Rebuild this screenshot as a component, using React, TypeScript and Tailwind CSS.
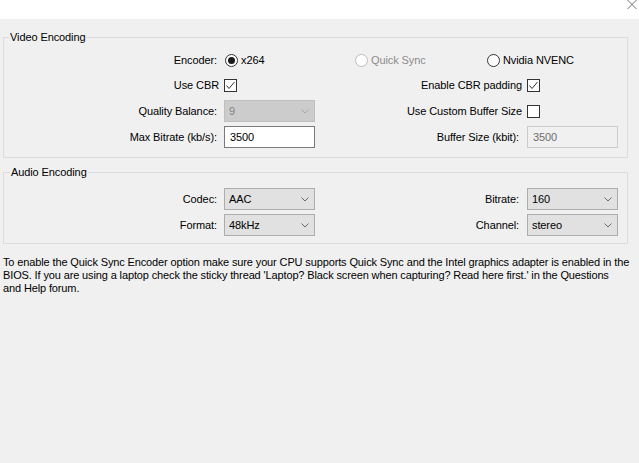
import React from "react";

function Checkbox({ checked }: { checked?: boolean }) {
  return (
    <span className="flex h-[13px] w-[13px] items-center justify-center border border-[#333333] bg-white">
      {checked && (
        <svg width="11" height="11" viewBox="0 0 11 11">
          <path d="M1.5 5.5 L4 8.5 L9.5 2" fill="none" stroke="#333333" strokeWidth="1" />
        </svg>
      )}
    </span>
  );
}

function Radio({ checked, disabled }: { checked?: boolean; disabled?: boolean }) {
  return (
    <span
      className={
        "flex h-[13px] w-[13px] items-center justify-center rounded-full border bg-white " +
        (disabled ? "border-[#bcbcbc]" : "border-[#333333]")
      }
    >
      {checked && <span className="h-[7px] w-[7px] rounded-full bg-[#1a1a1a]" />}
    </span>
  );
}

function Chevron({ color }: { color: string }) {
  return (
    <svg width="8" height="5" viewBox="0 0 8 5">
      <path d="M0.5 0.5 L4 4 L7.5 0.5" fill="none" stroke={color} strokeWidth="1" />
    </svg>
  );
}

function Select({ value, disabled }: { value: string; disabled?: boolean }) {
  return (
    <div
      className={
        "flex h-[22px] w-[91px] items-center justify-between border pl-[4px] pr-[5px] " +
        (disabled ? "border-[#bfbfbf] bg-[#cccccc] text-[#838383]" : "border-[#adadad] bg-[#e1e1e1] text-black")
      }
    >
      <span>{value}</span>
      <Chevron color={disabled ? "#a8a8a8" : "#6a6a6a"} />
    </div>
  );
}

function Input({ value, disabled }: { value: string; disabled?: boolean }) {
  return (
    <div
      className={
        "flex h-[22px] w-[91px] items-center border pl-[5px] " +
        (disabled ? "border-[#cccccc] bg-[#f0f0f0] text-[#6d6d6d]" : "border-[#7a7a7a] bg-white text-black")
      }
    >
      {value}
    </div>
  );
}

function Label({ children, pr = "pr-[7px]" }: { children: React.ReactNode; pr?: string }) {
  return <div className={"flex items-center justify-end whitespace-nowrap " + pr}>{children}</div>;
}

export default function App() {
  return (
    <div className="h-[463px] w-[639px] overflow-hidden bg-[#f0f0f0] font-['Liberation_Sans',Arial,sans-serif] text-[11px] leading-[13px] tracking-[-0.1px] text-black">
      <div className="flex h-[19px] items-start justify-end bg-white pr-[2px]">
        <svg width="10" height="9" viewBox="0 0 10 9">
          <path d="M0.5 0 L9.5 9 M9.5 0 L0.5 9" stroke="#707070" strokeWidth="1" />
        </svg>
      </div>

      <fieldset className="ml-[3px] mt-[12px] w-[625px] border border-[#dcdcdc] pb-[9px] pt-[6px]">
        <legend className="ml-[5px] px-[1px] leading-[13px]">Video Encoding</legend>
        <div className="grid grid-cols-[220px_91px_212px_91px] grid-rows-[21px_21px_22px_22px] gap-y-[4px]">
          <Label>Encoder:</Label>
          <div className="col-span-3 flex items-center">
            <div className="flex w-[131px] items-center gap-[3px] pl-[1px]">
              <Radio checked />
              <span>x264</span>
            </div>
            <div className="flex w-[132px] items-center gap-[3px]">
              <Radio disabled />
              <span className="text-[#8c8c8c]">Quick Sync</span>
            </div>
            <div className="flex items-center gap-[3px]">
              <Radio />
              <span>Nvidia NVENC</span>
            </div>
          </div>

          <Label pr="pr-[5px]">Use CBR</Label>
          <div className="flex items-center">
            <Checkbox checked />
          </div>
          <Label pr="pr-[5px]">Enable CBR padding</Label>
          <div className="flex items-center">
            <Checkbox checked />
          </div>

          <Label>Quality Balance:</Label>
          <div className="flex items-center">
            <Select value="9" disabled />
          </div>
          <Label pr="pr-[5px]">Use Custom Buffer Size</Label>
          <div className="flex items-center">
            <Checkbox />
          </div>

          <Label>Max Bitrate (kb/s):</Label>
          <div className="flex items-center">
            <Input value="3500" />
          </div>
          <Label pr="pr-[8px]">Buffer Size (kbit):</Label>
          <div className="flex items-center">
            <Input value="3500" disabled />
          </div>
        </div>
      </fieldset>

      <fieldset className="ml-[3px] mt-[8px] w-[625px] border border-[#dcdcdc] pb-[7px] pt-[9px]">
        <legend className="ml-[6px] px-[1px] leading-[13px]">Audio Encoding</legend>
        <div className="grid grid-cols-[220px_91px_212px_91px] grid-rows-[22px_22px] gap-y-[4px]">
          <Label>Codec:</Label>
          <Select value="AAC" />
          <Label pr="pr-[8px]">Bitrate:</Label>
          <Select value="160" />

          <Label>Format:</Label>
          <Select value="48kHz" />
          <Label pr="pr-[8px]">Channel:</Label>
          <Select value="stereo" />
        </div>
      </fieldset>

      <div className="ml-[3px] mt-[12px] whitespace-nowrap text-[11px] leading-[13px] tracking-[-0.13px]">
        <p>
          To enable the Quick Sync Encoder option make sure your CPU supports Quick Sync and the Intel graphics adapter is enabled in the
        </p>
        <p>
          BIOS. If you are using a laptop check the sticky thread 'Laptop? Black screen when capturing? Read here first.' in the Questions
        </p>
        <p>and Help forum.</p>
      </div>
    </div>
  );
}
